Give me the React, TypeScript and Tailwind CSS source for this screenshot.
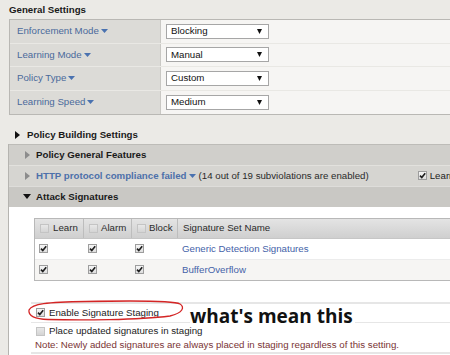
import React from "react";

const SETTINGS = [
  { label: "Enforcement Mode", value: "Blocking" },
  { label: "Learning Mode", value: "Manual" },
  { label: "Policy Type", value: "Custom" },
  { label: "Learning Speed", value: "Medium" },
];

const SIGNATURE_SETS = ["Generic Detection Signatures", "BufferOverflow"];

function DownTri({ color = "#4a72b0", w = 7, h = 4 }: { color?: string; w?: number; h?: number }) {
  return (
    <svg width={w} height={h} viewBox={`0 0 ${w} ${h}`} className="flex-none">
      <path d={`M0 0 L${w} 0 L${w / 2} ${h} Z`} fill={color} />
    </svg>
  );
}

function RightTri({ color }: { color: string }) {
  return (
    <svg width="5" height="8" viewBox="0 0 5 8" className="flex-none">
      <path d="M0 0 L5 4 L0 8 Z" fill={color} />
    </svg>
  );
}

function Box({ checked }: { checked?: boolean }) {
  return (
    <span
      className={
        checked
          ? "inline-flex h-[9px] w-[9px] flex-none items-center justify-center border border-[#9d9d9d] bg-linear-to-b from-[#f6f6f6] to-[#dedede]"
          : "inline-flex h-[9px] w-[9px] flex-none border border-[#c4c4c4] bg-linear-to-b from-[#e8e8e8] to-[#d4d4d4]"
      }
    >
      {checked && (
        <svg width="7" height="7" viewBox="0 0 7 7">
          <path d="M1 3.6 L2.8 5.6 L6.2 1.2" stroke="#1e1e1e" strokeWidth="1.6" fill="none" />
        </svg>
      )}
    </span>
  );
}

function Select({ value }: { value: string }) {
  return (
    <div className="flex h-[15px] w-[103px] items-center justify-between border border-[#a6a6a6] bg-white pl-[4px] pr-[6px] text-[#111]">
      <span>{value}</span>
      <DownTri color="#111" w={5} h={5} />
    </div>
  );
}

export default function App() {
  return (
    <div className="relative h-[355px] w-[450px] overflow-hidden bg-[#ebeae6] font-['Liberation_Sans',Arial,sans-serif] text-[9.7px] leading-[12px] text-[#222]">
      <div className="h-[19px] pl-[9px] pt-[4px] font-bold text-[#1a1a1a]">General Settings</div>

      <div className="ml-[9px] border-y border-l border-[#b9b8b4]">
        {SETTINGS.map((row, i) => (
          <div
            key={row.label}
            className={
              i < SETTINGS.length - 1
                ? "flex h-[23.5px] border-b border-[#e9e8e4]"
                : "flex h-[23px]"
            }
          >
            <div className="flex w-[151px] items-center gap-[2px] border-r border-[#c9c8c4] bg-[#dcdbd7] pl-[7px] text-[#4a6a9b]">
              <span>{row.label}</span>
              <DownTri />
            </div>
            <div className="flex flex-1 items-center bg-[#f6f5f3] pl-[5px]">
              <Select value={row.value} />
            </div>
          </div>
        ))}
      </div>

      <div className="mt-[11px] flex h-[18px] items-center gap-[7px] pl-[15px] font-bold text-[#1a1a1a]">
        <RightTri color="#111" />
        <span>Policy Building Settings</span>
      </div>

      <div className="ml-[8px] border-l border-[#b5b4b0]">
        <div className="flex h-[21px] items-center gap-[6px] border-t border-[#bdbcb8] bg-[#d0cfcb] pl-[16px] font-bold text-[#1a1a1a]">
          <RightTri color="#8c8c8c" />
          <span>Policy General Features</span>
        </div>
        <div className="flex h-[21px] items-center whitespace-nowrap border-t border-[#e2e1dd] bg-[#d6d5d1] pl-[16px]">
          <RightTri color="#8c8c8c" />
          <span className="ml-[6px] font-bold text-[#4d70aa]">HTTP protocol compliance failed</span>
          <span className="ml-[2px]">
            <DownTri />
          </span>
          <span className="ml-[3px] text-[#2a2a2a]">(14 out of 19 subviolations are enabled)</span>
          <span className="ml-[49px] flex flex-none items-center gap-[3px]">
            <Box checked />
            <span>Learn</span>
          </span>
        </div>
        <div className="flex h-[21px] items-center gap-[5px] border-t border-[#dedddA] bg-[#c9c8c4] pl-[14px] font-bold text-[#1a1a1a]">
          <DownTri color="#111" w={8} h={5} />
          <span>Attack Signatures</span>
        </div>

        <div className="h-[149px] bg-white pl-[25px] pt-[11px]">
          <div className="w-[440px] border border-[#b8b8b8]">
            <div className="flex h-[20px] border-b border-[#c6c6c6] bg-linear-to-b from-[#e4e4e4] to-[#cfcfcf] text-[#2a2a2a]">
              <div className="flex w-[49px] items-center gap-[4px] border-r border-[#bdbdbd] pl-[5px]">
                <Box />
                <span>Learn</span>
              </div>
              <div className="flex w-[48px] items-center gap-[3px] border-r border-[#bdbdbd] pl-[5px]">
                <Box />
                <span>Alarm</span>
              </div>
              <div className="flex w-[46px] items-center gap-[3px] border-r border-[#bdbdbd] pl-[5px]">
                <Box />
                <span>Block</span>
              </div>
              <div className="flex flex-1 items-center pl-[5px]">Signature Set Name</div>
            </div>
            {SIGNATURE_SETS.map((name, i) => (
              <div
                key={name}
                className={
                  i === 0
                    ? "flex h-[21px] items-center border-b border-[#ececec] bg-white"
                    : "flex h-[20px] items-center bg-[#f6f5f3]"
                }
              >
                <div className="flex w-[49px] pl-[4px]">
                  <Box checked />
                </div>
                <div className="flex w-[48px] pl-[4px]">
                  <Box checked />
                </div>
                <div className="flex w-[46px] pl-[3px]">
                  <Box checked />
                </div>
                <div className="pl-[4px] text-[#4462a8]">{name}</div>
              </div>
            ))}
          </div>

          <div className="-ml-[3px] mt-[21px] border-y-2 border-[#e6e6e6]">
            <div className="flex h-[19px] items-center gap-[4px] border-b border-[#e6e6e6] pl-[5px]">
              <Box checked />
              <span>Enable Signature Staging</span>
            </div>
            <div className="flex h-[16px] items-center gap-[4px] pl-[5px] pt-[1px]">
              <Box />
              <span>Place updated signatures in staging</span>
            </div>
            <div className="h-[13px] pl-[4px] text-[#7a3434]">
              Note: Newly added signatures are always placed in staging regardless of this setting.
            </div>
          </div>
        </div>
      </div>

      <svg
        className="absolute left-[26px] top-[299px]"
        width="162"
        height="25"
        viewBox="0 0 162 25"
        fill="none"
      >
        <path
          d="M3 11 C6 5, 20 3, 60 2.5 C110 1.5, 148 1.5, 154 5 C159 8, 157 14, 144 17 C112 21, 55 21.5, 22 20.5 C9 20, 2 17, 3 11 Z"
          stroke="#d42525"
          strokeWidth="1.3"
        />
      </svg>

      <div className="absolute left-[190px] top-[305px] bg-white pr-[2px] font-['Open_Sans',sans-serif] text-[19px] font-bold leading-[22px] text-[#111]">
        what's mean this
      </div>
    </div>
  );
}
